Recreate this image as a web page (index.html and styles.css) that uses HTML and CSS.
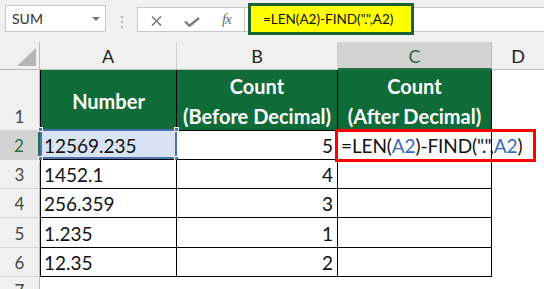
FILE: index.html
```html
<!DOCTYPE html>
<html>
<head>
<meta charset="utf-8">
<title>Excel LEN FIND</title>
<link rel="stylesheet" href="styles.css">
</head>
<body>
<div class="app">
  <div class="toolbar">
    <div class="namebox">
      <span>SUM</span>
      <svg class="nb-arrow" width="8" height="4" viewBox="0 0 8 4"><path d="M0 0H8L4 4Z" fill="#7a7a7a"/></svg>
    </div>
    <svg class="grip" width="2" height="12" viewBox="0 0 2 12"><rect x="0" y="0" width="2" height="2" fill="#b4b4b4"/><rect x="0" y="5" width="2" height="2" fill="#b4b4b4"/><rect x="0" y="10" width="2" height="2" fill="#b4b4b4"/></svg>
    <div class="fbar">
      <div class="btns">
        <svg class="ico-x" width="11" height="10" viewBox="0 0 11 10"><path d="M1 0.5L10 9.5M10 0.5L1 9.5" stroke="#7d7d7d" stroke-width="1.6" fill="none"/></svg>
        <svg class="ico-ok" width="16" height="10" viewBox="0 0 16 10"><path d="M1 4.5L5.5 8.8L15 1" stroke="#7d7d7d" stroke-width="2.4" fill="none"/></svg>
        <span class="fx">fx</span>
      </div>
      <div class="finput">
        <div class="hl">=LEN(A2)-FIND(".",A2)</div>
      </div>
    </div>
  </div>

  <div class="sheet">
    <!-- column headers -->
    <div class="corner"><svg width="19" height="18" viewBox="0 0 19 18"><path d="M19 0V18H0Z" fill="#b6b6b6"/></svg></div>
    <div class="ch">A</div>
    <div class="ch">B</div>
    <div class="ch cur">C</div>
    <div class="ch last">D</div>

    <!-- row 1 -->
    <div class="rh">1</div>
    <div class="c h a">Number</div>
    <div class="c h">Count<br>(Before Decimal)</div>
    <div class="c h">Count<br>(After Decimal)</div>
    <div class="e"></div>

    <!-- row 2 -->
    <div class="rh cur">2</div>
    <div class="c a sel">12569.235<span class="selbox"><i class="hd tl"></i><i class="hd tr"></i><i class="hd bl"></i><i class="hd br"></i></span></div>
    <div class="c num">5</div>
    <div class="c f">=LEN(<span class="ref">A2</span>)-FIND(".",<span class="ref">A2</span>)<span class="redbox"></span></div>
    <div class="e"></div>

    <!-- row 3 -->
    <div class="rh">3</div>
    <div class="c a">1452.1</div>
    <div class="c num">4</div>
    <div class="c"></div>
    <div class="e"></div>

    <!-- row 4 -->
    <div class="rh">4</div>
    <div class="c a">256.359</div>
    <div class="c num">3</div>
    <div class="c"></div>
    <div class="e"></div>

    <!-- row 5 -->
    <div class="rh">5</div>
    <div class="c a">1.235</div>
    <div class="c num">1</div>
    <div class="c"></div>
    <div class="e"></div>

    <!-- row 6 -->
    <div class="rh">6</div>
    <div class="c a">12.35</div>
    <div class="c num">2</div>
    <div class="c"></div>
    <div class="e"></div>

    <!-- row 7 -->
    <div class="rh r7">7</div>
    <div class="e"></div>
    <div class="e"></div>
    <div class="e"></div>
    <div class="e"></div>
  </div>
</div>
</body>
</html>
```

FILE: styles.css
```css
* { box-sizing: border-box; margin: 0; padding: 0; }
html, body { width: 544px; height: 289px; overflow: hidden; background: #fff; }
body { font-family: Lato, "Liberation Sans", sans-serif; color: #000; }

.app { width: 544px; height: 289px; overflow: hidden; }

/* ---------- toolbar ---------- */
.toolbar {
  height: 42px;
  background: #f0f0f0;
  display: flex;
  align-items: flex-start;
  padding: 5px 0 0 5px;
}
.namebox {
  width: 101px;
  height: 27px;
  background: #fff;
  border: 1px solid #c6c6c6;
  display: flex;
  align-items: center;
  justify-content: space-between;
  padding: 0 5px 0 6px;
  font-size: 14px;
  color: #333;
}
.nb-arrow { margin-top: 1px; }
.grip { margin: 11px 0 0 15px; }
.fbar { flex: 1; display: flex; margin-left: 14px; }
.btns {
  width: 108px;
  height: 25px;
  margin-top: 2px;
  background: #fff;
  border: 1px solid #c6c6c6;
  display: flex;
  align-items: center;
  padding-left: 13px;
}
.ico-x { margin-top: 2px; }
.ico-ok { margin: 5px 0 0 22px; }
.fx {
  margin-left: 22px;
  font-family: "Liberation Serif", serif;
  font-style: italic;
  font-size: 15px;
  color: #6a6a6a;
  letter-spacing: -1px;
}
.finput {
  flex: 1;
  height: 25px;
  margin-top: 2px;
  background: #fff;
  border-top: 1px solid #c6c6c6;
  border-bottom: 1px solid #c6c6c6;
}
.hl {
  width: 166px;
  height: 32px;
  margin: -5px 0 0 3px;
  border: 3px solid #1a6334;
  background: #ffff00;
  padding-left: 12px;
  font-size: 13.5px;
  line-height: 26px;
  color: #111;
  white-space: nowrap;
}

/* ---------- sheet ---------- */
.sheet {
  display: grid;
  grid-template-columns: 40px 137px 161px 154px 1fr;
  grid-template-rows: 28px 61px 29px 29px 29px 30px 29px 29px;
  background: #fff;
}
.corner {
  background: #f0f0f0;
  border-right: 1px solid #bcbcbc;
  border-bottom: 1px solid #bcbcbc;
  display: flex;
  justify-content: flex-end;
  align-items: flex-end;
  padding: 0 3px 3px 0;
}
.ch {
  background: #f0f0f0;
  border-right: 1px solid #d0d0d0;
  border-bottom: 1px solid #bcbcbc;
  display: flex;
  align-items: center;
  justify-content: center;
  font-size: 18px;
  color: #222;
  padding-top: 1px;
}
.ch.cur {
  background: #d2d2d2;
  border-right-color: #bcbcbc;
  border-bottom: 2px solid #217346;
  color: #3d5e48;
}
.ch.last { border-right: none; }

.rh {
  background: #f0f0f0;
  border-right: 1px solid #bcbcbc;
  border-bottom: 1px solid #d4d4d4;
  display: flex;
  justify-content: center;
  align-items: flex-end;
  font-size: 17px;
  line-height: 20px;
  color: #444;
  padding-bottom: 3px;
}
.rh.cur {
  background: #d2d2d2;
  border-right: 2px solid #217346;
  color: #2f6a45;
}
.rh.r7 { align-items: flex-start; padding-top: 4px; }

.c {
  border-right: 1px solid #000;
  border-bottom: 1px solid #000;
  display: flex;
  align-items: flex-end;
  padding: 0 4px 2px 3px;
  font-size: 19px;
  line-height: 23px;
  white-space: nowrap;
  color: #111;
  position: relative;
}
.c.a { border-left: 1px solid #000; }
.c.num { justify-content: flex-end; }
.c.h {
  background: #0f6b37;
  color: #fff;
  font-weight: 700;
  font-size: 20px;
  line-height: 30px;
  justify-content: center;
  align-items: center;
  text-align: center;
  padding: 1px 0 0 0;
}

.sel { background: #dae3f3; }
.selbox {
  position: absolute;
  top: -2px;
  left: -1px;
  right: -1px;
  bottom: 0;
  border: 2px solid #4a72b5;
}
.hd {
  position: absolute;
  width: 5px;
  height: 5px;
  background: #4a72b5;
  border: 1px solid #fff;
}
.hd.tl { top: -4px; left: -4px; }
.hd.tr { top: -4px; right: -4px; }
.hd.bl { bottom: -4px; left: -4px; }
.hd.br { bottom: -4px; right: -4px; }

.c.f { z-index: 1; padding-left: 3px; letter-spacing: -0.1px; }
.ref { color: #3a6ac2; }
.redbox {
  position: absolute;
  left: -3px;
  top: -2px;
  width: 201px;
  height: 33px;
  border: 3px solid #f00;
}
.e { background: transparent; }
```
